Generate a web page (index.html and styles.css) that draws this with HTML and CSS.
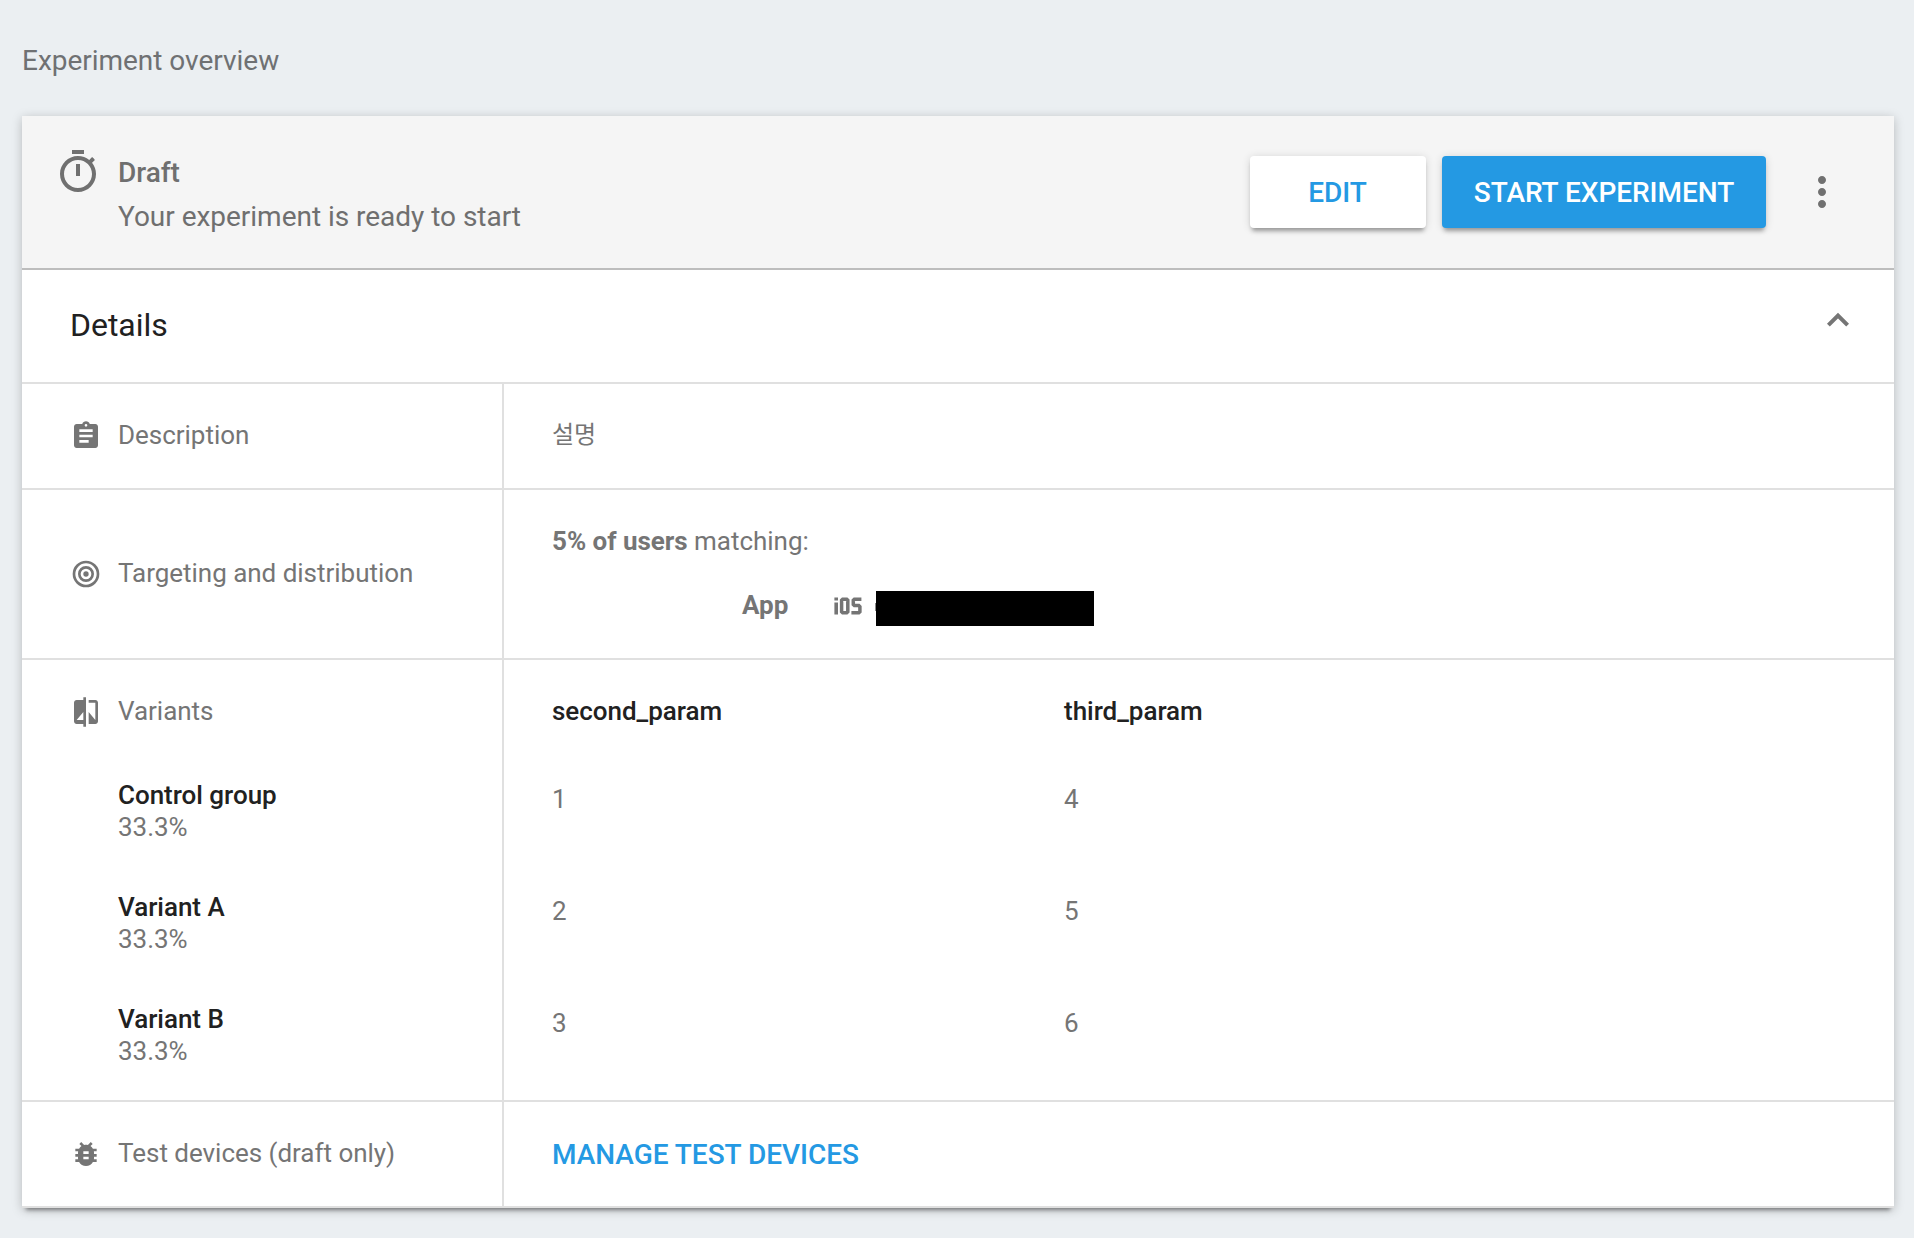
FILE: index.html
```html
<!DOCTYPE html>
<html lang="en">
<head>
<meta charset="utf-8">
<title>Experiment overview</title>
<link rel="stylesheet" href="styles.css">
</head>
<body>
<h1 class="page-title">Experiment overview</h1>
<main class="card">
  <header class="status">
    <svg class="status-icon" viewBox="0 0 24 24"><path d="M15 1H9v2h6V1zm-4 13h2V8h-2v6zm8.030-6.610l1.420-1.420c-.43-.51-.9-.99-1.410-1.410l-1.420 1.420C16.070 4.740 14.120 4 12 4c-4.970 0-9 4.030-9 9s4.020 9 9 9 9-4.030 9-9c0-2.120-.74-4.070-1.970-5.610zM12 20c-3.870 0-7-3.130-7-7s3.130-7 7-7 7 3.130 7 7-3.130 7-7 7z"/></svg>
    <div class="status-text">
      <strong>Draft</strong>
      <span>Your experiment is ready to start</span>
    </div>
    <button class="btn btn-edit">EDIT</button>
    <button class="btn btn-start">START EXPERIMENT</button>
    <svg class="more" viewBox="0 0 24 24"><path d="M12 8c1.100 0 2-.9 2-2s-.9-2-2-2-2 .9-2 2 .9 2 2 2zm0 2c-1.100 0-2 .9-2 2s.9 2 2 2 2-.9 2-2-.9-2-2-2zm0 6c-1.100 0-2 .9-2 2s.9 2 2 2 2-.9 2-2-.9-2-2-2z"/></svg>
  </header>
  <section class="details-head">
    <h2>Details</h2>
    <svg class="chevron" viewBox="0 0 44 44"><path d="M12.400 27.200L22 17.600l9.600 9.600"/></svg>
  </section>
  <section class="row row-description">
    <div class="label">
      <svg class="icon" viewBox="0 0 24 24"><path d="M19 3h-4.180C14.400 1.840 13.300 1 12 1c-1.300 0-2.400.84-2.820 2H5c-1.100 0-2 .9-2 2v14c0 1.100.9 2 2 2h14c1.100 0 2-.9 2-2V5c0-1.100-.9-2-2-2zm-7 0c.55 0 1 .45 1 1s-.45 1-1 1-1-.45-1-1 .45-1 1-1zm2 14H7v-2h7v2zm3-4H7v-2h10v2zm0-4H7V7h10v2z"/></svg>
      <span>Description</span>
    </div>
    <div class="value korean">설명</div>
  </section>
  <section class="row row-targeting">
    <div class="label">
      <svg class="icon" viewBox="0 0 24 24"><g class="rings"><circle cx="12" cy="12" r="9"/><circle cx="12" cy="12" r="5"/></g><circle cx="12" cy="12" r="2"/></svg>
      <span>Targeting and distribution</span>
    </div>
    <div class="value">
      <p class="audience"><b>5% of users</b> matching:</p>
      <div class="condition">
        <b class="condition-name">App</b>
        <svg class="ios" viewBox="0 0 28 18"><path class="ios-dot" d="M.400 .500h3.600v3H.400zM.400 5.500h3.600v12H.400z"/><path class="ios-line" d="M8.700 2.200h4l1.100 1.100v11.400l-1.100 1.100h-4l-1.100-1.100V3.300zM27.400 2.200h-7l-1.100 1.100v4.200l1.100 1.100h4.400l1.100 1.100v5l-1.100 1.100h-7.400"/></svg>
        <span class="redacted"></span>
      </div>
    </div>
  </section>
  <section class="row row-variants">
    <div class="label-column">
      <div class="label">
        <svg class="icon" viewBox="0 0 24 24"><path d="M10 3H5c-1.100 0-2 .9-2 2v14c0 1.100.9 2 2 2h5v2h2V1h-2v2zm0 15H5l5-6v6zm9-15h-5v2h5v13l-5-6v9h5c1.100 0 2-.9 2-2V5c0-1.100-.9-2-2-2z"/></svg>
        <span>Variants</span>
      </div>
      <div class="variant"><b>Control group</b><span>33.3%</span></div>
      <div class="variant"><b>Variant A</b><span>33.3%</span></div>
      <div class="variant"><b>Variant B</b><span>33.3%</span></div>
    </div>
    <div class="params">
      <b>second_param</b><b>third_param</b>
      <span>1</span><span>4</span>
      <span>2</span><span>5</span>
      <span>3</span><span>6</span>
    </div>
  </section>
  <section class="row row-devices">
    <div class="label">
      <svg class="icon" viewBox="0 0 24 24"><path d="M20 8h-2.810c-.45-.78-1.070-1.450-1.820-1.960L17 4.410 15.590 3l-2.170 2.170C12.960 5.060 12.490 5 12 5c-.49 0-.96.060-1.410.170L8.410 3 7 4.410l1.620 1.630C7.880 6.550 7.260 7.220 6.810 8H4v2h2.090c-.050.330-.090.660-.090 1v1H4v2h2v1c0 .340.040.670.090 1H4v2h2.810c1.040 1.790 2.970 3 5.190 3s4.150-1.210 5.190-3H20v-2h-2.090c.050-.330.090-.660.090-1v-1h2v-2h-2v-1c0-.340-.040-.670-.090-1H20V8zm-6 8h-4v-2h4v2zm0-4h-4v-2h4v2z"/></svg>
      <span>Test devices (draft only)</span>
    </div>
    <div class="value"><a class="manage">MANAGE TEST DEVICES</a></div>
  </section>
</main>
</body>
</html>
```
FILE: styles.css
```css
* { box-sizing: border-box; }

body {
  margin: 0;
  padding: 41px 20px 30px 22px;
  background: #ebeff2;
  color: #757575;
  font: 26px/32px Roboto, "Noto Sans CJK KR", sans-serif;
  letter-spacing: -.025px;
}

h1, h2, p { margin: 0; font-weight: 400; }
b, strong { font-weight: 500; }
svg { display: block; flex: none; fill: #757575; }

.page-title {
  height: 75px;
  color: #6f7173;
  font-size: 28px;
  line-height: 40px;
}

.card {
  height: 1092px;
  background: #fff;
  box-shadow: 0 6px 4px -4px rgba(0, 0, 0, .4), 0 2px 10px rgba(0, 0, 0, .22);
}

.status {
  display: flex;
  align-items: center;
  height: 154px;
  padding-right: 48px;
  background: #f5f5f5;
  border-bottom: 2px solid #bdbdbd;
}
.status-icon {
  align-self: flex-start;
  width: 48px;
  height: 48px;
  margin: 32px 16px 0 32px;
}
.status-icon, .more { fill: #707070; }
.status-text {
  display: flex;
  flex: 1;
  flex-direction: column;
  color: #6f6f6f;
  font-size: 28px;
  line-height: 44px;
  padding-top: 6px;
}

.btn {
  height: 72px;
  padding: 2px 0 0;
  border: 0;
  border-radius: 4px;
  font: 500 28px/70px Roboto, sans-serif;
  letter-spacing: inherit;
  box-shadow: 0 5px 4px -2px rgba(0, 0, 0, .32), 0 1px 8px rgba(0, 0, 0, .14);
}
.btn-edit { width: 176px; margin-right: 16px; padding-right: 1px; background: #fff; color: #2499e3; }
.btn-start { width: 324px; background: #2499e3; color: #fff; }
.more { width: 48px; height: 48px; margin-left: 32px; }

.details-head {
  display: flex;
  justify-content: space-between;
  height: 114px;
  padding: 35px 34px 0 48px;
  border-bottom: 2px solid #e0e0e0;
}
h2 { color: #212121; font-size: 32px; line-height: 40px; }
.chevron { width: 44px; height: 44px; margin-top: -7px; fill: none; stroke: #757575; stroke-width: 4; }

.row { display: flex; border-bottom: 2px solid #e0e0e0; }
.row-description { height: 106px; }
.row-targeting { height: 170px; }
.row-variants { height: 442px; }
.row-devices { height: 106px; }

.label {
  display: flex;
  align-items: center;
  width: 482px;
  gap: 16px;
  padding-left: 48px;
}
.label > span { padding-bottom: 2px; }
.icon { width: 32px; height: 32px; }
.rings { fill: none; stroke: #757575; stroke-width: 2; }
.row > .label, .label-column { border-right: 2px solid #e0e0e0; }
.label-column { width: 482px; }
.label-column .label { height: 104px; }

.value {
  display: flex;
  flex: 1;
  flex-direction: column;
  justify-content: center;
  padding-left: 48px;
}
.korean { padding-bottom: 2px; font-size: 24px; }
.audience b, .condition-name { font-weight: 700; }
.condition { display: flex; align-items: center; height: 36px; margin-top: 30px; padding-left: 190px; }
.ios { width: 28px; height: 18px; margin: 2px 14px 0 46px; }
.ios-line { fill: none; stroke: #757575; stroke-width: 3.5; }
.redacted { position: relative; width: 218px; height: 35px; margin-top: 7px; background: #000; }
/* edge of the app badge left uncovered by the redaction bar */
.redacted::before {
  content: "";
  position: absolute;
  left: -1px;
  top: 12px;
  width: 1px;
  height: 8px;
  background: #8a8a8a;
}

.variant {
  display: flex;
  flex-direction: column;
  height: 112px;
  padding: 15px 0 0 96px;
}
.variant b, .params b { color: #212121; }

.params {
  display: grid;
  grid-template-columns: 512px 512px;
  grid-template-rows: 104px repeat(3, 112px);
  padding-left: 48px;
}
.params b { line-height: 102px; }
.params span { padding-top: 19px; }

.manage { padding-top: 2px; color: #2499e3; font-size: 28px; font-weight: 500; }
```
